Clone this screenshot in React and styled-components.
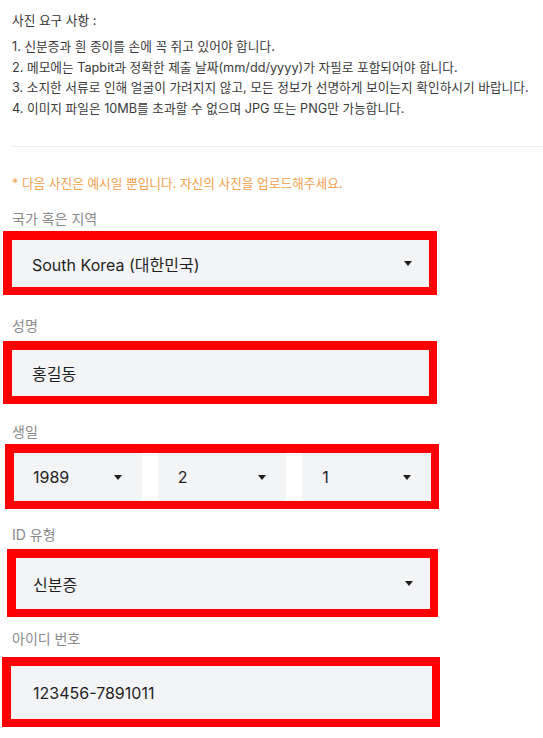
import styled, { createGlobalStyle } from "styled-components";

const GlobalStyle = createGlobalStyle`
    body{
        margin: 0;
        background: #fff;
        font-family: Inter, "Noto Sans CJK KR", sans-serif;
    }
`

const Page = styled.div`
    padding: 11px 0 0 12px;
    width: 531px;
`

const Title = styled.p`
    margin: 0 0 6px;
    font-size: 12.7px;
    line-height: 20px;
    color: #333;
`

const Rules = styled.ol`
    margin: 0;
    padding: 0;
    list-style: none;
    & li{
        font-size: 12.7px;
        line-height: 20.5px;
        color: #3a3a3a;
        white-space: nowrap;
    }
`

const Divider = styled.hr`
    border: none;
    border-top: 1px solid #ececec;
    margin: 27px 0 0;
`

const Notice = styled.p`
    margin: 27px 0 15px;
    font-size: 12.7px;
    line-height: 20px;
    color: #f2a04c;
`

const Field = styled.div`
    width: 416px;
    margin-bottom: ${p => p.$mb ?? 18}px;
`

const Label = styled.label`
    display: block;
    font-size: 14px;
    line-height: 20px;
    color: #8a8a8a;
    margin-bottom: ${p => p.$gap ?? 2}px;
`

const Highlight = styled.div`
    margin-left: ${p => p.$x ?? -9}px;
    width: ${p => p.$w ?? 417}px;
    border: solid #f00;
    border-width: 9px 8px 8px 9px;
`

const Box = styled.div`
    height: ${p => p.$h || 48}px;
    background: #f3f4f6;
    border-radius: ${p => p.$round ? "4px" : "0"};
    display: flex;
    align-items: center;
    justify-content: space-between;
    padding: 0 17px 0 ${p => p.$pl ?? 20}px;
    font-size: 16px;
    color: #1f1f1f;
    flex: 1;
`

const DateRow = styled.div`
    display: flex;
    gap: 16px;
`

const Caret = styled.span`
    width: 0;
    height: 0;
    border-left: 4px solid transparent;
    border-right: 4px solid transparent;
    border-top: 5px solid #1f1f1f;
    margin-right: ${p => p.$small ? "3px" : "0"};
`

const Select = ({ value, round, h, small, pl }) => (
    <Box $round={round} $h={h} $pl={pl}>
        <span>{value}</span>
        <Caret $small={small} />
    </Box>
)

const rules = [
    "1. 신분증과 흰 종이를 손에 꼭 쥐고 있어야 합니다.",
    "2. 메모에는 Tapbit과 정확한 제출 날짜(mm/dd/yyyy)가 자필로 포함되어야 합니다.",
    "3. 소지한 서류로 인해 얼굴이 가려지지 않고, 모든 정보가 선명하게 보이는지 확인하시기 바랍니다.",
    "4. 이미지 파일은 10MB를 초과할 수 없으며 JPG 또는 PNG만 가능합니다.",
]

export default function App(){
    return(
        <>
            <GlobalStyle />
            <Page>
                <Title>사진 요구 사항 :</Title>
                <Rules>
                    {rules.map(r => <li key={r}>{r}</li>)}
                </Rules>
                <Divider />
                <Notice>* 다음 사진은 예시일 뿐입니다. 자신의 사진을 업로드해주세요.</Notice>

                <Field $mb={21}>
                    <Label>국가 혹은 지역</Label>
                    <Highlight>
                        <Select value="South Korea (대한민국)" h={47} />
                    </Highlight>
                </Field>

                <Field $mb={18}>
                    <Label $gap={5}>성명</Label>
                    <Highlight>
                        <Box $h={46}>홍길동</Box>
                    </Highlight>
                </Field>

                <Field $mb={16}>
                    <Label>생일</Label>
                    <Highlight $x={-7}>
                        <DateRow>
                            <Select value="1989" round h={48} small pl={19} />
                            <Select value="2" round h={48} small />
                            <Select value="1" round h={48} small />
                        </DateRow>
                    </Highlight>
                </Field>

                <Field $mb={12}>
                    <Label $gap={4}>ID 유형</Label>
                    <Highlight $x={-5} $w={414}>
                        <Select value="신분증" h={51} pl={17} />
                    </Highlight>
                </Field>

                <Field $mb={0}>
                    <Label $gap={8}>아이디 번호</Label>
                    <Highlight $x={-10} $w={421}>
                        <Box $h={53} $pl={22}>123456-7891011</Box>
                    </Highlight>
                </Field>
            </Page>
        </>
    )
}
